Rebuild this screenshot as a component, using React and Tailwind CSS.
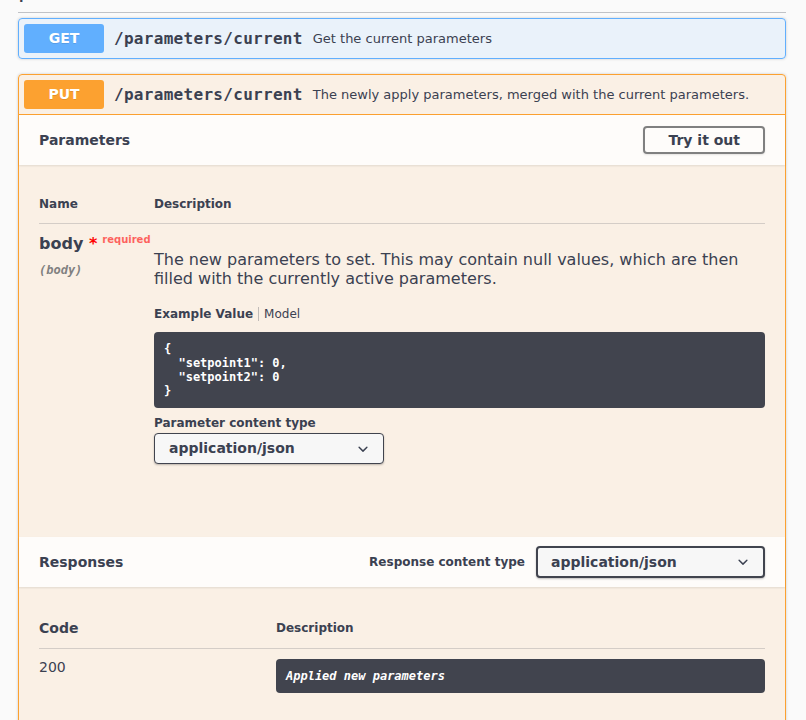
import React from "react";

const Chevron = () => (
  <svg width="20" height="20" viewBox="0 0 20 20" className="shrink-0">
    <path
      fill="#3b4151"
      d="M13.418 7.859a.695.695 0 01.978 0 .68.68 0 010 .969l-3.908 3.83a.697.697 0 01-.979 0l-3.908-3.83a.68.68 0 010-.969.695.695 0 01.978 0L10 11l3.418-3.141z"
    />
  </svg>
);

const mono = "font-['DejaVu_Sans_Mono',monospace]";

export default function App() {
  return (
    <div className="min-h-screen bg-[#fafafa] font-['DejaVu_Sans',sans-serif] text-[#3b4151]">
      <div className="pl-[18px] pr-[20px]">
        <div className="h-[13px] overflow-hidden border-b border-[#3b4151]/30">
          <div className="-mt-[25px] text-[24px] leading-[28px]">parameters</div>
        </div>

        {/* GET */}
        <div className="mt-[5px] mb-[15px] rounded border border-[#61affe] bg-[#61affe]/10 shadow-[0_0_3px_rgba(0,0,0,0.19)]">
          <div className="flex items-center p-[5px]">
            <div className="min-w-[80px] rounded-[3px] bg-[#61affe] py-[6px] text-center text-[14px] font-bold leading-[17px] text-white [text-shadow:0_1px_0_rgba(0,0,0,0.1)]">
              GET
            </div>
            <div className={`${mono} px-[10px] text-[16px] font-bold tracking-[0.3px]`}>/parameters/current</div>
            <div className="text-[13px]">Get the current parameters</div>
          </div>
        </div>

        {/* PUT */}
        <div className="rounded border border-[#fca130] bg-[#fca130]/10 shadow-[0_0_3px_rgba(0,0,0,0.19)]">
          <div className="flex items-center border-b border-[#fca130] p-[5px]">
            <div className="min-w-[80px] rounded-[3px] bg-[#fca130] py-[6px] text-center text-[14px] font-bold leading-[17px] text-white [text-shadow:0_1px_0_rgba(0,0,0,0.1)]">
              PUT
            </div>
            <div className={`${mono} px-[10px] text-[16px] font-bold tracking-[0.3px]`}>/parameters/current</div>
            <div className="text-[13px]">The newly apply parameters, merged with the current parameters.</div>
          </div>

          {/* Parameters header */}
          <div className="flex min-h-[50px] items-center justify-between bg-white/80 px-[20px] py-[8px] shadow-[0_1px_2px_rgba(0,0,0,0.1)]">
            <h4 className="text-[14px] font-bold">Parameters</h4>
            <button className="rounded border-2 border-[#808080] px-[23px] py-[4px] text-[14px] font-bold leading-[16px] text-[#3b4151] shadow-[0_1px_2px_rgba(0,0,0,0.1)]">
              Try it out
            </button>
          </div>

          <div className="px-[20px] pt-[20px] pb-[73px]">
            <div className="flex border-b border-[#3b4151]/20 py-[12px] text-[12px] font-bold leading-[14px]">
              <div className="w-[115px]">Name</div>
              <div>Description</div>
            </div>
            <div className="flex pt-[10px]">
              <div className="w-[115px] shrink-0">
                <div className="whitespace-nowrap text-[16px] font-bold leading-[19px]">
                  body
                  <span className="text-[#ff0000]">&nbsp;*</span>
                  <span className="relative -top-[6px] px-[5px] text-[10px] text-[#ff0000]/60">required</span>
                </div>
                <div className={`${mono} mt-[8px] text-[12px] font-bold italic leading-[14px] text-[#808080]`}>(body)</div>
              </div>
              <div className="flex-1">
                <p className="mt-[16px] pr-[4px] text-[16px] leading-[19px]">
                  The new parameters to set. This may contain null values, which are then filled with the currently active parameters.
                </p>
                <div className="mt-[19px] flex items-center text-[12px] leading-[14px]">
                  <span className="font-bold">Example Value</span>
                  <span className="mx-[5px] h-[14px] w-px bg-[#3b4151]/30"></span>
                  <span>Model</span>
                </div>
                <pre className={`${mono} mt-[11px] rounded bg-[#41444e] p-[10px] text-[12px] font-bold leading-[14px] text-white`}>
{`{
  "setpoint1": 0,
  "setpoint2": 0
}`}
                </pre>
                <div className="mt-[8px] text-[12px] font-bold leading-[14px]">Parameter content type</div>
                <div className="mt-[3px] flex h-[31px] w-[230px] items-center justify-between rounded border border-[#41444e] bg-[#f7f7f7] pl-[14px] pr-[10px] shadow-[0_1px_2px_rgba(0,0,0,0.25)]">
                  <span className="text-[14px] font-bold">application/json</span>
                  <Chevron />
                </div>
              </div>
            </div>
          </div>

          {/* Responses header */}
          <div className="flex min-h-[50px] items-center justify-between bg-white/80 px-[20px] py-[8px] shadow-[0_1px_2px_rgba(0,0,0,0.1)]">
            <h4 className="text-[14px] font-bold">Responses</h4>
            <div className="flex items-center gap-[11px]">
              <span className="text-[12px] font-bold">Response content type</span>
              <div className="flex h-[32px] w-[229px] items-center justify-between rounded border-2 border-[#41444e] bg-[#f7f7f7] pl-[13px] pr-[10px] shadow-[0_1px_2px_rgba(0,0,0,0.25)]">
                <span className="text-[14px] font-bold">application/json</span>
                <Chevron />
              </div>
            </div>
          </div>

          <div className="px-[20px] pt-[20px] pb-[60px]">
            <div className="flex items-center border-b border-[#3b4151]/20 pt-[13px] pb-[11px] font-bold leading-[17px]">
              <div className="w-[237px] text-[14px]">Code</div>
              <div className="text-[12px]">Description</div>
            </div>
            <div className="flex pt-[10px]">
              <div className="w-[237px] shrink-0 text-[14px] leading-[17px]">200</div>
              <div className={`${mono} flex-1 rounded bg-[#41444e] p-[10px] text-[12px] font-bold italic leading-[14px] text-white`}>
                Applied new parameters
              </div>
            </div>
          </div>
        </div>
      </div>
    </div>
  );
}
